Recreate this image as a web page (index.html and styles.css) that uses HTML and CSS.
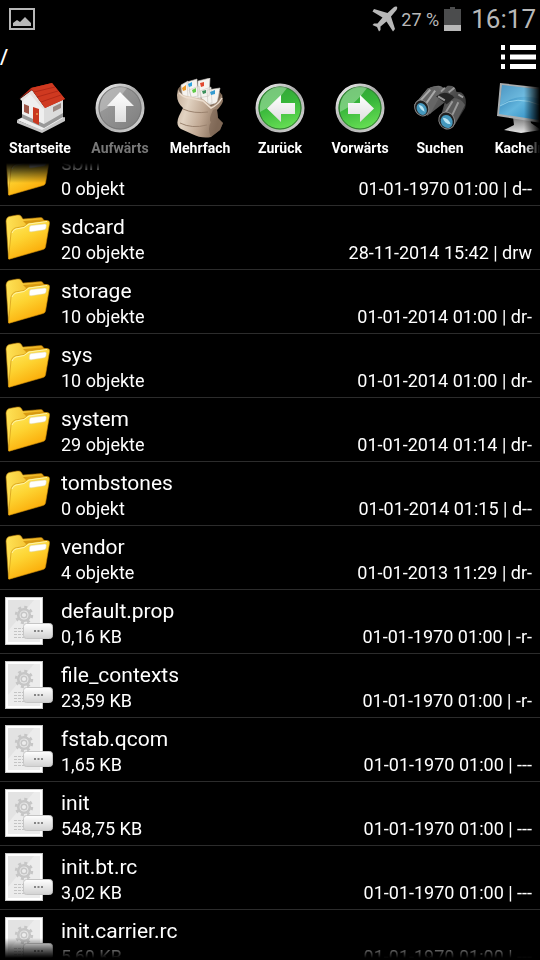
FILE: index.html
```html
<!DOCTYPE html>
<html lang="de">
<head>
<meta charset="utf-8">
<meta name="viewport" content="width=device-width, initial-scale=1">
<title>Dateimanager</title>
<link rel="stylesheet" href="styles.css">
</head>
<body>
<svg class="defs" aria-hidden="true">
  <defs>
    <linearGradient id="gold" x1="0" y1="0" x2="0.5" y2="1"><stop offset="0" stop-color="#ffee66"/><stop offset="0.5" stop-color="#fdd331"/><stop offset="1" stop-color="#fba805"/></linearGradient>
    <linearGradient id="goldBack" x1="0" y1="0" x2="1" y2="0"><stop offset="0" stop-color="#ffe356"/><stop offset="1" stop-color="#eba915"/></linearGradient>
    <linearGradient id="ring" x1="0" y1="0" x2="1" y2="1"><stop offset="0" stop-color="#f4f4f4"/><stop offset="0.5" stop-color="#a8a8a8"/><stop offset="1" stop-color="#d8d8d8"/></linearGradient>
    <linearGradient id="grayDisc" x1="0" y1="0" x2="1" y2="1"><stop offset="0" stop-color="#a5a5a5"/><stop offset="1" stop-color="#7c7c7c"/></linearGradient>
    <linearGradient id="greenDisc" x1="0" y1="0" x2="0.3" y2="1"><stop offset="0" stop-color="#2fa035"/><stop offset="0.5" stop-color="#37b53a"/><stop offset="1" stop-color="#63dc52"/></linearGradient>
    <linearGradient id="arrow" x1="0" y1="0" x2="0" y2="1"><stop offset="0" stop-color="#ffffff"/><stop offset="1" stop-color="#dedede"/></linearGradient>
    <linearGradient id="tag" x1="0" y1="0" x2="0" y2="1"><stop offset="0" stop-color="#ffffff"/><stop offset="1" stop-color="#d2d2d2"/></linearGradient>
    <linearGradient id="sack" x1="0" y1="0" x2="1" y2="0.3"><stop offset="0" stop-color="#c3ad98"/><stop offset="0.3" stop-color="#e2d3c2"/><stop offset="0.65" stop-color="#c0a893"/><stop offset="1" stop-color="#8b735f"/></linearGradient>
    <linearGradient id="metal" x1="0" y1="0.2" x2="1" y2="0.8"><stop offset="0" stop-color="#a5a5a5"/><stop offset="0.4" stop-color="#5c5c5c"/><stop offset="1" stop-color="#292929"/></linearGradient>
    <linearGradient id="screen" x1="0" y1="0" x2="1" y2="1"><stop offset="0" stop-color="#1f6da5"/><stop offset="0.5" stop-color="#63b6de"/><stop offset="1" stop-color="#1c7fb9"/></linearGradient>
    <linearGradient id="stand" x1="0" y1="0" x2="0" y2="1"><stop offset="0" stop-color="#777777"/><stop offset="1" stop-color="#e5e5e5"/></linearGradient>
    <symbol id="folder" viewBox="0 0 48 48">
      <path d="M1 8Q1 5 4 3.500L12 2Q15 1.500 16 3L18 6 36 4.500Q38 4.500 38.500 7L42 8 39 35 3.500 46Z" fill="url(#goldBack)" stroke="#a66d05" stroke-width=".6"/>
      <path d="M18 8 38 6.500 40 9 22 12Z" fill="#d99b12"/>
      <path d="M3.500 45.500 6 20Q7 16 10 15L19 13.500 23 10 42 7.500Q45 7.500 44.500 10.500L40.500 34Q40 36 38 36.500L5 46Q3.500 46.500 3.500 45.500Z" fill="url(#gold)" stroke="#c98a08" stroke-width=".6"/>
      <path d="M7 20Q8 17 11 16L19 14.500 24 11 42 8.500" fill="none" stroke="#fff4ac"/>
      <path d="M26 12.500 40 11Q41.500 11 41.300 12.500L41 15Q40.500 16.500 39 16.800L26 18.800Q24 19 24.300 17L24.500 14.500Q24.800 12.800 26 12.500Z" fill="#fff" stroke="#dcd6bb" stroke-width=".5"/>
    </symbol>
    <symbol id="file" viewBox="0 0 48 48">
      <path d="M0 0H38V48H0Z" fill="#c8c8c8"/><path d="M1 1H37V47H1Z" fill="#fff"/>
      <path d="M3 3H35V45H3Z" fill="#ececec"/><path d="M3 3H29L3 34Z" fill="#e3e3e3"/>
      <circle cx="19" cy="18" r="5.800" fill="none" stroke="#c6c6c6" stroke-width="2.600"/>
      <circle cx="19" cy="18" r="7.900" fill="none" stroke="#c6c6c6" stroke-width="2.600" stroke-dasharray="3 3.205"/>
      <circle cx="19" cy="18" r="2.800" fill="none" stroke="#c6c6c6" stroke-width="1.400"/>
      <path d="M9 31.500H19M9 34.500H19M9 37.500H19M9 40.500H19" stroke="#c4c4c4" stroke-dasharray="3 1"/>
      <rect x="18.500" y="26.500" width="29" height="15" rx="3" fill="url(#tag)" stroke="#c5c5c5"/>
      <path d="M29 34H31M32.500 34H34.500M36 34H38" stroke="#666" stroke-width="1.600"/>
    </symbol>
  </defs>
</svg>
<div class="screen">
  <header class="status">
    <svg class="status-picture" viewBox="0 0 26 22" role="img" aria-label="Bild"><path d="M1 1H25V21H1Z" fill="none" stroke="#b8b8b8" stroke-width="2"/><path d="M4 18V15L8 12 11 14 16 9 22 15V18Z" fill="#b8b8b8"/></svg>
    <svg class="status-plane" viewBox="0 0 26 26" role="img" aria-label="Flugmodus"><path d="M24.500 .5Q26 1 24.500 4L19 10.500 23 23 21 25.500 14.500 15.500 8.500 20.500 8.500 24 7 25.500 5 21 .5 19 2 17.500 5.500 17.500 10.500 11.500 .5 5.500 2 3 15.500 7 21.500 1.500Q23 0 24.500 .5Z" fill="#b8b8b8"/></svg>
    <span class="percent">27 %</span>
    <svg class="status-battery" viewBox="0 0 17 24" role="img" aria-label="Akku"><path d="M6 0H11V2H17V24H0V2H6Z" fill="#4b4c4d"/><path d="M0 18H17V24H0Z" fill="#b8b8b8"/></svg>
    <time class="clock">16:17</time>
  </header>
  <div class="pathbar">
    <span class="path">/</span>
    <button class="view" aria-label="Ansicht"><svg viewBox="0 0 36 24"><path d="M1 2.500H5M1 12H5M1 21.500H5M10 2.500H36M10 12H36M10 21.500H36" stroke="#fff" stroke-width="5"/></svg></button>
  </div>
  <nav class="tools">
    <button class="tool"><svg viewBox="0 0 52 60"><path d="M3 42 27 30 51 40 28 53Z" fill="#eee"/><path d="M3 42 28 52 51 39V43L28 55 3 45Z" fill="#c7c7c7"/><path d="M8 22 17 14 30 30V50L8 40Z" fill="#efefef"/><path d="M30 29 49 20V38L30 50Z" fill="#dcdcdc"/><path d="M8 36 30 46 49 35V39L30 50 8 40Z" fill="#999"/><path d="M6 21 18 12 31 30 29 31 16 16 8 23Z" fill="#e7e0dd"/><path d="M5 21 17 10 38 5 51 21 31 30 18 12Z" fill="#b92a18"/><path d="M17 10 38 5 51 21 31 30Z" fill="#cf3920"/><path d="M20 14 41 9M23 19 44 13M27 24 47 17" stroke="#ab2414" stroke-width=".8"/><path d="M19 29 25 31V47L19 44Z" fill="#c93820"/><path d="M10 26 15 28V36L10 34Z" fill="#9c5547"/><path d="M39 29 47 25V30L39 34Z" fill="#9b8a84"/><path d="M22 36H24" stroke="#fc6"/></svg><span>Startseite</span></button>
    <button class="tool" disabled><svg viewBox="0 0 52 60"><circle cx="26" cy="30" r="23" fill="url(#grayDisc)" stroke="url(#ring)" stroke-width="3"/><circle cx="26" cy="30" r="21" fill="none" stroke="#777"/><path d="M6 34Q22 26 33 10 22 6 13 14 5 21 6 34Z" fill="#d0d0d0" opacity=".45"/><path d="M26 14 40 28H32V44H21V28H13Z" fill="url(#arrow)"/></svg><span>Aufwärts</span></button>
    <button class="tool"><svg viewBox="0 0 52 60"><path d="M4 11Q8 5 14 7L44 13Q50 16 47 22L38 30 8 22Z" fill="#776250"/><path d="M7 7 14 3 17 20 9 22ZM13 4 23 1 24 18 14 20ZM24 3 36 0 35 18 24 20ZM15 12 25 8 27 23 19 24ZM26 13 37 9 38 25 29 26ZM33 12 46 10 43 25 34 27Z" fill="#f5f3ef" stroke="#c8c3be" stroke-width=".6"/><path d="M8 10 12 7V12L9 13Z" fill="#ef9a29"/><path d="M14 6 18 4V8L15 9Z" fill="#31a4df"/><path d="M26 5 30 4V8L27 9Z" fill="#e1482f"/><path d="M18 12 22 10V14L19 15Z" fill="#61ca49"/><path d="M28 13 32 12V15L29 16Z" fill="#3c8f5c"/><path d="M36 14 41 12V16L37 17Z" fill="#349bd1"/><path d="M4 11Q7 18 14 18L29 21 37 28Q43 26 48 16L49 23Q48 27 43 32L44 40 49 45 46 52 37 59Q28 61 18 56L7 51Q1 47 5 38L9 30Q3 25 3 17Z" fill="url(#sack)"/><path d="M5 15Q10 20 16 20L29 23 37 30Q44 27 48 20" fill="none" stroke="#ecddce" stroke-width="1.500"/><path d="M9 31Q20 36 34 34M6 45Q18 51 33 47" fill="none" stroke="#9b836f" stroke-width="1"/><path d="M39 32Q43 30 43 32L44 40 49 45 46 52 37 59Q33 50 37 44 34 42 39 32Z" fill="#715c4b" opacity=".5"/></svg><span>Mehrfach</span></button>
    <button class="tool"><svg viewBox="0 0 52 60"><circle cx="26" cy="30" r="23" fill="url(#greenDisc)" stroke="url(#ring)" stroke-width="3"/><circle cx="26" cy="30" r="21" fill="none" stroke="#356f37"/><path d="M6 34Q22 26 33 10 22 6 13 14 5 21 6 34Z" fill="#c7edc9" opacity=".45"/><path d="M13 30.500 27 17V25H41V36H27V44Z" fill="url(#arrow)"/></svg><span>Zurück</span></button>
    <button class="tool"><svg viewBox="0 0 52 60"><circle cx="26" cy="30" r="23" fill="url(#greenDisc)" stroke="url(#ring)" stroke-width="3"/><circle cx="26" cy="30" r="21" fill="none" stroke="#356f37"/><path d="M6 34Q22 26 33 10 22 6 13 14 5 21 6 34Z" fill="#c7edc9" opacity=".45"/><path d="M40 30.500 26 17V25H14V36H26V44Z" fill="url(#arrow)"/></svg><span>Vorwärts</span></button>
    <button class="tool"><svg viewBox="0 0 54 60"><path d="M20 8Q28 5 31 10L35 7Q43 6 44 13L49 14Q56 19 53 30L42 48 28 38 32 24 14 38 0 27 14 10Z" fill="url(#metal)"/><path d="M14 10Q20 6 25 8L29 14 17 36 1 26Z" fill="#666"/><path d="M17 11 5 24M22 12 10 29" stroke="#aaa" stroke-width="2"/><path d="M37 20Q48 18 53 27L42 48 27 39Z" fill="#5a5a5a"/><path d="M40 23 32 36M46 24 39 39" stroke="#999" stroke-width="2"/><path d="M23 18Q32 10 42 19L34 26Z" fill="#242424"/><path d="M28 13 32 9M36 14 42 9M46 16 51 19M25 18 32 22" stroke="#999" stroke-width="2" fill="none"/><ellipse cx="8" cy="30" rx="7" ry="8.500" transform="rotate(-28 8 30)" fill="#202020" stroke="#888"/><ellipse cx="8" cy="31" rx="5" ry="6.500" transform="rotate(-28 8 31)" fill="#4598bd"/><path d="M5 27Q10 27 11 34 6 32 5 27Z" fill="#b9e5f5"/><ellipse cx="34" cy="43" rx="8" ry="9" transform="rotate(-28 34 43)" fill="#202020" stroke="#888"/><ellipse cx="34" cy="44" rx="6" ry="7" transform="rotate(-28 34 44)" fill="#4598bd"/><path d="M30 40Q36 40 38 47 31 46 30 40Z" fill="#b9e5f5"/></svg><span>Suchen</span></button>
    <button class="tool"><svg viewBox="0 0 52 60"><path d="M19 39H36L37 45 47 52 27 55 10 52 20 47Z" fill="url(#stand)"/><path d="M6 5 51 10 47 45 3 38Z" fill="#a9adaf"/><path d="M8 7 50 12 45 42 5 36Z" fill="url(#screen)"/><path d="M8 7 50 12 47 21Q22 14 6 28Z" fill="#8fd2ed" opacity=".4"/><path d="M6 28Q22 17 46 27" fill="none" stroke="#a9e1f4" opacity=".7"/></svg><span>Kacheln</span></button>
  </nav>
  <main class="viewport">
    <ul class="files">
      <li class="row"><svg class="icon"><use href="#folder"/></svg><a href="#" class="name">sbin</a><span class="size">0 objekt</span><span class="meta">01-01-1970 01:00 | d--</span></li>
      <li class="row"><svg class="icon"><use href="#folder"/></svg><a href="#" class="name">sdcard</a><span class="size">20 objekte</span><span class="meta">28-11-2014 15:42 | drw</span></li>
      <li class="row"><svg class="icon"><use href="#folder"/></svg><a href="#" class="name">storage</a><span class="size">10 objekte</span><span class="meta">01-01-2014 01:00 | dr-</span></li>
      <li class="row"><svg class="icon"><use href="#folder"/></svg><a href="#" class="name">sys</a><span class="size">10 objekte</span><span class="meta">01-01-2014 01:00 | dr-</span></li>
      <li class="row"><svg class="icon"><use href="#folder"/></svg><a href="#" class="name">system</a><span class="size">29 objekte</span><span class="meta">01-01-2014 01:14 | dr-</span></li>
      <li class="row"><svg class="icon"><use href="#folder"/></svg><a href="#" class="name">tombstones</a><span class="size">0 objekt</span><span class="meta">01-01-2014 01:15 | d--</span></li>
      <li class="row"><svg class="icon"><use href="#folder"/></svg><a href="#" class="name">vendor</a><span class="size">4 objekte</span><span class="meta">01-01-2013 11:29 | dr-</span></li>
      <li class="row"><svg class="icon"><use href="#file"/></svg><a href="#" class="name">default.prop</a><span class="size">0,16 KB</span><span class="meta">01-01-1970 01:00 | -r-</span></li>
      <li class="row"><svg class="icon"><use href="#file"/></svg><a href="#" class="name">file_contexts</a><span class="size">23,59 KB</span><span class="meta">01-01-1970 01:00 | -r-</span></li>
      <li class="row"><svg class="icon"><use href="#file"/></svg><a href="#" class="name">fstab.qcom</a><span class="size">1,65 KB</span><span class="meta">01-01-1970 01:00 | ---</span></li>
      <li class="row"><svg class="icon"><use href="#file"/></svg><a href="#" class="name">init</a><span class="size">548,75 KB</span><span class="meta">01-01-1970 01:00 | ---</span></li>
      <li class="row"><svg class="icon"><use href="#file"/></svg><a href="#" class="name">init.bt.rc</a><span class="size">3,02 KB</span><span class="meta">01-01-1970 01:00 | ---</span></li>
      <li class="row"><svg class="icon"><use href="#file"/></svg><a href="#" class="name">init.carrier.rc</a><span class="size">5,60 KB</span><span class="meta">01-01-1970 01:00 | ---</span></li>
    </ul>
  </main>
</div>
</body>
</html>
```
FILE: styles.css
```css
* { box-sizing: border-box; }

body {
  margin: 0;
  background: #000;
  color: #fff;
  font-family: Roboto, "Liberation Sans", sans-serif;
}

button {
  padding: 0;
  border: 0;
  background: none;
  color: inherit;
  font: inherit;
}

a { color: inherit; text-decoration: none; }
svg { display: block; }

.defs { position: absolute; width: 0; height: 0; }

.screen {
  display: flex;
  flex-direction: column;
  height: 100vh;
  padding-bottom: 2px;
  overflow: hidden;
}

.status {
  display: flex;
  flex: none;
  align-items: center;
  height: 38px;
  padding: 0 4px 0 9px;
  color: #b8b8b8;
}

.status-picture { width: 26px; height: 22px; margin-right: auto; }
.status-plane { width: 26px; height: 26px; margin-right: 3px; }
.percent { margin-right: 5px; font-size: 18px; }
.status-battery { width: 17px; height: 24px; margin-right: 10px; }
.clock { font-size: 26px; }

.pathbar {
  display: flex;
  flex: none;
  align-items: center;
  justify-content: space-between;
  height: 38px;
  padding-right: 4px;
}

.path { font-size: 21px; font-weight: 500; }
.view svg { width: 36px; height: 24px; }

.tools {
  display: flex;
  flex: none;
  height: 87px;
  overflow: hidden;
  -webkit-mask-image: linear-gradient(to left, transparent, #000 16px);
  mask-image: linear-gradient(to left, transparent, #000 16px);
}

.tool {
  display: flex;
  flex: none;
  flex-direction: column;
  align-items: center;
  width: 80px;
  padding-top: 2px;
  font-size: 14px;
  font-weight: 700;
  line-height: 20px;
}

.tool svg { width: 52px; height: 60px; }
.tool:disabled { color: #777; }

.viewport {
  flex: 1;
  min-height: 0;
  overflow: hidden;
  -webkit-mask-image: linear-gradient(transparent, #000 20px, #000 calc(100% - 20px), transparent);
  mask-image: linear-gradient(transparent, #000 20px, #000 calc(100% - 20px), transparent);
}

/* The list is scrolled a little way into its first row. */
.files {
  margin: -21px 0 0;
  padding: 0;
  list-style: none;
}

.row {
  display: grid;
  grid-template-columns: 48px 1fr auto;
  grid-template-rows: 28px 24px;
  column-gap: 8px;
  height: 64px;
  padding: 7px 8px 0 5px;
  border-bottom: 1px solid #2c2c2c;
}

.icon { grid-row: 1 / 3; width: 48px; height: 48px; }
.name { grid-column: 2 / 4; font-size: 21px; line-height: 28px; }
.size, .meta { font-size: 18px; line-height: 24px; }
```
